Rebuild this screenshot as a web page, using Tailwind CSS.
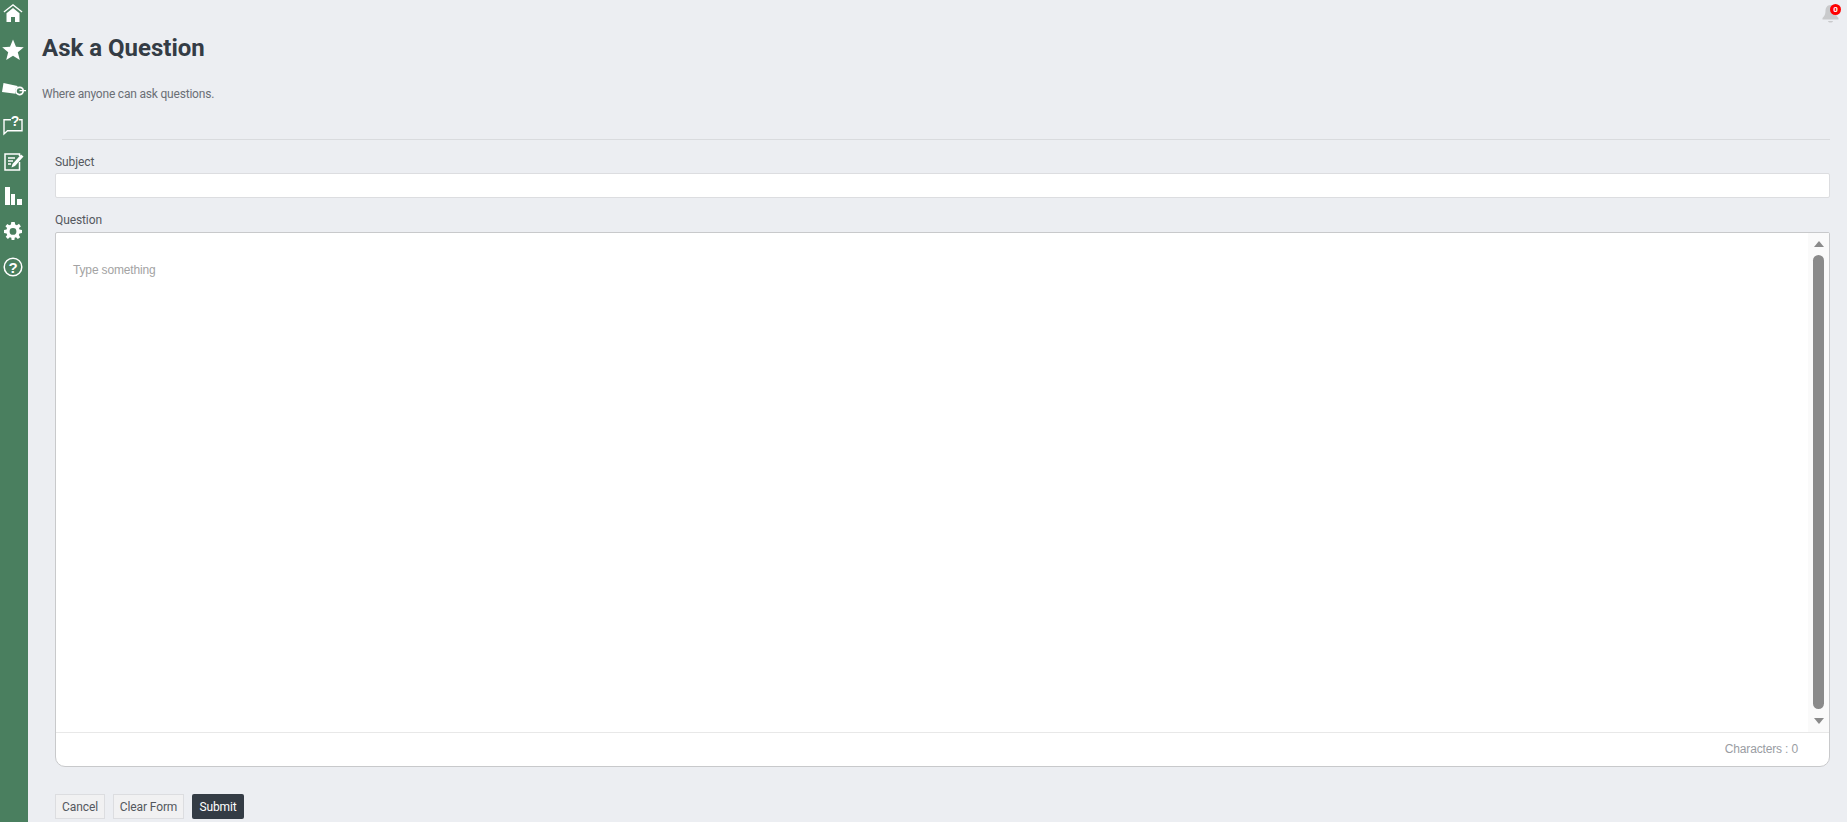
<!DOCTYPE html>
<html lang="en">

<head>
    <meta charset="UTF-8">
    <title>Ask a Question</title>
    <script src="https://cdn.jsdelivr.net/npm/@tailwindcss/browser@4"></script>
</head>

<body class="bg-[#eceef2] font-['Roboto','Noto_Sans',sans-serif] text-[#444b52] overflow-hidden">
    <div class="flex h-[822px]">
        <!-- sidebar icons -->
        <aside class="w-[28px] shrink-0 bg-[#4a7f5f] flex flex-col items-center pr-[2px] text-white">
            <a class="h-[26px] flex items-center justify-center">
                <svg width="20" height="19" viewBox="0 0 20 19" fill="currentColor" class="mt-[1px]">
                    <path d="M10 0 L19.5 7.6 L18.7 8.6 L10 1.7 L1.3 8.6 L0.5 7.6 Z" />
                    <path d="M10 4 L16.5 9.2 V18 H12 V13 H8 V18 H3.5 V9.2 Z" />
                </svg>
            </a>
            <a class="h-[48px] flex items-center justify-center">
                <svg width="22" height="22" viewBox="0 0 22 22" fill="currentColor">
                    <path d="M11 0.5 L14 7.8 L21.8 8.3 L15.8 13.3 L17.8 21 L11 16.8 L4.2 21 L6.2 13.3 L0.2 8.3 L8 7.8 Z" />
                </svg>
            </a>
            <a class="h-[30px] flex items-center justify-center">
                <svg width="24" height="13" viewBox="0 0 24 13" fill="currentColor" class="ml-[2px]">
                    <path d="M1.5 0 L15.5 3 L15.5 4 A5 5 0 0 0 13.7 10.8 L0 9 Z" />
                    <path fill-rule="evenodd" d="M18 3.5 A4.5 4.5 0 1 0 22 8.3 H24 V7 H22 A4.5 4.5 0 0 0 18 3.5 Z M18 5.2 A2.8 2.8 0 0 1 20.4 7 H17.5 V8.3 H20.4 A2.8 2.8 0 1 1 18 5.2 Z" />
                </svg>
            </a>
            <a class="h-[40px] flex items-center justify-center">
                <svg width="20" height="24" viewBox="0 0 20 24" fill="none" stroke="currentColor" stroke-width="1.4">
                    <path d="M8 7.7 H1 V22 L4.5 18.7 H19 V7.7 H16" />
                    <text x="12" y="14" font-family="Liberation Sans, sans-serif" font-size="14" font-weight="700" fill="currentColor" stroke="none" text-anchor="middle">?</text>
                </svg>
            </a>
            <a class="h-[36px] flex items-center justify-center">
                <svg width="20" height="18" viewBox="0 0 20 18" fill="none" stroke="currentColor" class="ml-[1px]">
                    <path stroke-width="1.5" d="M15.5 9 V17 H1 V1 H15.5 V3" />
                    <path stroke-width="1.5" d="M4 5 H11 M4 8 H9 M4 11 H7" />
                    <path fill="currentColor" stroke="none" d="M17 1.5 L19.5 3.5 L11 13 L7.5 14.5 L8.5 11 Z" />
                </svg>
            </a>
            <a class="h-[32px] flex items-center justify-center">
                <svg width="17" height="18" viewBox="0 0 17 18" fill="currentColor">
                    <rect x="0" y="0" width="5" height="18" />
                    <rect x="6" y="7" width="4" height="11" />
                    <rect x="12" y="12" width="5" height="6" />
                </svg>
            </a>
            <a class="h-[38px] flex items-center justify-center">
                <svg width="18" height="18" viewBox="0 0 18 18" fill="currentColor">
                    <path fill-rule="evenodd" d="M7.3 0 H10.7 L11.2 2.5 L12.9 3.2 L15 1.8 L16.9 4.5 L15 6 L15.5 7.6 L18 8 V11 L15.5 11.4 L14.8 13 L16.2 15.2 L13.8 17 L12 15.3 L10.7 15.8 L10.4 18 H7.6 L7.3 15.8 L5.8 15.2 L3.9 16.9 L1.7 14.8 L3.2 12.9 L2.6 11.4 L0 11 V8 L2.5 7.6 L3.1 6 L1.4 4.2 L3.4 2 L5.2 3.2 L6.9 2.5 Z M9 6 A3.4 3.4 0 1 0 9 12.8 A3.4 3.4 0 1 0 9 6 Z" />
                </svg>
            </a>
            <a class="h-[34px] flex items-center justify-center">
                <svg width="20" height="20" viewBox="0 0 20 20" fill="none" stroke="currentColor" stroke-width="1.5">
                    <circle cx="10" cy="10" r="8.8" />
                    <text x="10" y="15.5" font-family="Liberation Sans, sans-serif" font-size="15" font-weight="700" fill="currentColor" stroke="none" text-anchor="middle">?</text>
                </svg>
            </a>
        </aside>

        <main class="flex-1 min-w-0 relative">
            <!-- notification bell -->
            <div class="absolute top-[4px] right-[8px] w-[17px] h-[19px]">
                <svg width="17" height="19" viewBox="0 0 17 19" fill="#c9cacc">
                    <path d="M8.5 1 C5 1 3.5 4 3.5 7 C3.5 10 2.5 12 0.5 14 V15.5 H16.5 V14 C14.5 12 13.5 10 13.5 7 C13.5 4 12 1 8.5 1 Z" />
                    <path d="M6 17 H11 C10.5 19 6.5 19 6 17 Z" />
                </svg>
                <span class="absolute top-0 right-[-2px] w-[11px] h-[11px] rounded-full bg-[#ff0000] text-white text-[8px] leading-[11px] text-center font-bold">0</span>
            </div>

            <header class="pl-[14px] pt-[32px]">
                <h1 class="text-[24px] leading-[32px] font-bold text-[#343c45]">Ask a Question</h1>
                <p class="mt-[21px] text-[12px] tracking-[-0.2px] leading-[18px] text-[#6b6f76]">Where anyone can ask questions.</p>
            </header>

            <div class="ml-[34px] mr-[17px] mt-[36px] border-t border-[#d9dbde]"></div>

            <form class="ml-[27px] mr-[17px] mt-[13px]">
                <label class="block text-[12px] tracking-[-0.1px] leading-[18px] text-[#54585e]">Subject</label>
                <input type="text" class="block w-full h-[25px] mt-[2px] bg-white border border-[#dcdde0] rounded-[2px]">

                <label class="block mt-[13px] text-[12px] tracking-[-0.1px] leading-[18px] text-[#54585e]">Question</label>
                <div class="mt-[3px] h-[535px] bg-white border border-[#c8c9cb] rounded-b-[10px] rounded-t-[2px] flex flex-col">
                    <div class="flex-1 min-h-0 flex">
                        <div class="flex-1 pl-[17px] pt-[30px] font-['Liberation_Sans',sans-serif] text-[12px] tracking-[-0.15px] leading-[14px] text-[#a3a3a3]">Type something</div>
                        <!-- scrollbar -->
                        <div class="w-[21px] bg-[#fafafa] flex flex-col items-center pt-[8px] pb-[8px]">
                            <div class="w-0 h-0 border-x-[5px] border-x-transparent border-b-[6px] border-b-[#8a8a8a]"></div>
                            <div class="w-[11px] flex-1 mt-[8px] mb-[9px] rounded-[6px] bg-[#8a8a8a]"></div>
                            <div class="w-0 h-0 border-x-[5px] border-x-transparent border-t-[6px] border-t-[#8a8a8a]"></div>
                        </div>
                    </div>
                    <div class="h-[34px] shrink-0 border-t border-[#e8e8e8] flex items-center justify-end pr-[31px] pb-[2px] font-['Liberation_Sans',sans-serif] text-[12px] tracking-[-0.15px] text-[#9a9da3]">Characters : 0</div>
                </div>

                <div class="flex gap-[8px] mt-[27px]">
                    <button type="button" class="h-[25px] w-[50px] bg-[#f1f1f2] border border-[#dcdde0] text-[12px] tracking-[-0.1px] text-[#54585e]">Cancel</button>
                    <button type="button" class="h-[25px] w-[71px] bg-[#f1f1f2] border border-[#dcdde0] text-[12px] tracking-[-0.1px] text-[#54585e]">Clear Form</button>
                    <button type="button" class="h-[25px] w-[52px] bg-[#343c45] rounded-[2px] text-[12px] tracking-[-0.1px] text-white">Submit</button>
                </div>
            </form>
        </main>
    </div>
</body>

</html>
